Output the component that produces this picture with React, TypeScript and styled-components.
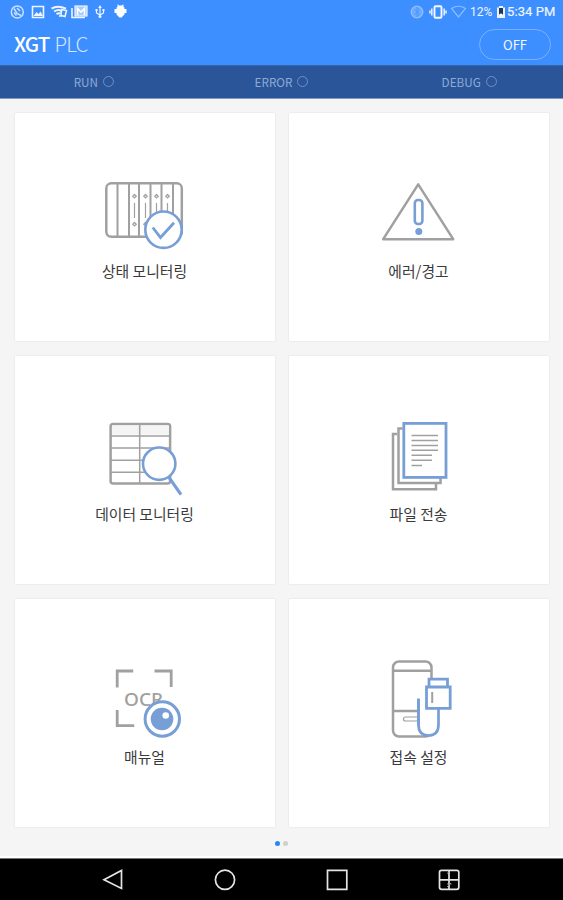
import React from "react";
import styled, { createGlobalStyle } from "styled-components";

const GRAY = "#a0a0a0";
const BLUE = "#779fd6";

const GlobalStyle = createGlobalStyle`
  * { box-sizing: border-box; }
  body { margin: 0; background: #f5f5f5; font-family: "Noto Sans CJK KR", "Noto Sans", sans-serif; }
`;

const Screen = styled.div`
  width: 563px;
  height: 900px;
  display: flex;
  flex-direction: column;
  overflow: hidden;
  background: #f5f5f5;
`;

const StatusBar = styled.div`
  height: 24px;
  flex: none;
  display: flex;
  justify-content: space-between;
  background: #3d8eff;
`;

const StatusRight = styled.div`
  display: flex;
  padding-right: 6px;
  color: #eef5ff;
  font: 400 13px/24px Roboto, sans-serif;
`;

const Battery = styled.span`
  width: 26px;
  font-size: 12px;
  white-space: nowrap;
`;

const Clock = styled.span`
  width: 50px;
  white-space: nowrap;
  letter-spacing: 0.1px;
  -webkit-text-stroke: 0.2px #eef5ff;
`;

const Header = styled.header`
  height: 41px;
  flex: none;
  display: flex;
  align-items: flex-start;
  justify-content: space-between;
  padding: 5px 12px 0 14px;
  background: #3d8eff;
`;

const Title = styled.h1`
  margin: 0;
  color: #fff;
  font-size: 20.5px;
  line-height: 29px;
  font-weight: 500;
  letter-spacing: -0.9px;
`;

const TitleLight = styled.span`
  margin-left: 5px;
  font-weight: 300;
  color: #d6e7ff;
`;

const PowerButton = styled.button`
  width: 72px;
  height: 31px;
  padding: 0;
  border: 1px solid #79b1ff;
  border-radius: 16px;
  background: transparent;
  color: #f4f9ff;
  font: 400 13px/27px "Noto Sans CJK KR", sans-serif;
`;

const Indicators = styled.div`
  height: 34px;
  flex: none;
  display: grid;
  grid-template-columns: repeat(3, 1fr);
  background: #2a5699;
  border-top: 1px solid #3164ac;
  border-bottom: 1px solid #8299c0;
`;

const Indicator = styled.div`
  display: flex;
  align-items: center;
  justify-content: center;
  gap: 5px;
  height: 31px;
  color: #8eaad5;
  font-size: 11.7px;
  line-height: 30px;
`;

const Lamp = styled.i`
  width: 11px;
  height: 11px;
  border: 1px solid #7090c4;
  border-radius: 50%;
`;

const Menu = styled.main`
  flex: none;
  display: grid;
  grid-template-columns: 260px 260px;
  grid-auto-rows: 228px;
  gap: 15px 14px;
  padding: 14px 14.500px 0;
`;

const Card = styled.section`
  display: flex;
  flex-direction: column;
  align-items: center;
  padding-top: 51px;
  background: #fff;
  border-radius: 1px;
  box-shadow: 0 0 2px rgba(0, 0, 0, 0.13);
`;

const CardIcon = styled.svg`
  flex: none;
  width: 120px;
  height: 96px;
  fill: none;
  stroke-width: 2.5;
`;

const CardLabel = styled.span`
  font-size: 14.8px;
  line-height: 21px;
  color: #3a3a3a;
  white-space: nowrap;
`;

const Pager = styled.div`
  flex: 1;
  display: flex;
  justify-content: center;
  gap: 3px;
  padding-top: 14px;
  border-bottom: 2px solid #fff;
`;

const Dot = styled.i<{ $active?: boolean }>`
  width: 5px;
  height: 5px;
  border-radius: 50%;
  background: ${(p) => (p.$active ? "#2b86f5" : "#cfcfcf")};
`;

const NavBar = styled.nav`
  height: 42px;
  flex: none;
  display: grid;
  grid-template-columns: repeat(4, 112px);
  justify-content: center;
  justify-items: center;
  padding-right: 1px;
  background: #000;
  border-top: 1px solid #777;
`;

const NavIcon = styled.svg`
  width: 30px;
  height: 41px;
  fill: none;
  stroke: #e4e4e4;
  stroke-width: 1.7;
`;

const StatusIcons = () => (
  <svg width="135" height="24" fill="none" stroke="#eef5ff" strokeWidth="1.5">
    <circle cx="17.3" cy="12" r="6" stroke="#c9e0ff" />
    <path d="M14 8.5l3 5 4 2M14 12.500l2.500 3M17 8l3 3" stroke="#c9e0ff" />
    <path d="M32.500 6.500h11v11h-11z" strokeWidth="1.600" />
    <path d="M33.500 16l3-4 2 2 2-2.500 2.500 4.500z" fill="#eef5ff" stroke="none" />
    <path d="M51.500 8.700q6-4 14.500 0M54 11.500q5-3 8 0M56.500 14q3-1.500 4 0" strokeWidth="2" />
    <path d="M61.500 9.500l5 1-1.500 6-4-1zM59 16h5" />
    <path d="M72 8v9.500h13" strokeWidth="1.600" />
    <rect x="75" y="6" width="12" height="10" fill="#a9cdff" strokeWidth="1.200" />
    <path d="M77.500 15V8.500l3.500 3.500 3.500-3.500V15" stroke="#fff" strokeWidth="1.600" />
    <path d="M100 7v10M96.500 10v3l3.500 2 3.500-2v-3" strokeWidth="1.200" />
    <path d="M98.200 8l1.800-3 1.800 3zM95.500 9h2v2h-2zM102.500 9h2v2h-2z" fill="#eef5ff" stroke="none" />
    <circle cx="100" cy="16.500" r="1.500" fill="#eef5ff" stroke="none" />
    <path d="M116.500 9q0-2.500 1.500-3l-1-1 1-.5 1.200 1h2.600l1.200-1 1 .5-1 1q1.500.5 1.500 3h2v4h-2v1.500l-3 3h-2l-3-3V13h-2V9z" fill="#fff" stroke="none" />
  </svg>
);

const SignalIcons = () => (
  <svg width="60" height="24" fill="none">
    <circle cx="7" cy="12" r="5.800" fill="#6eabff" stroke="#8fbeff" strokeWidth="1.300" />
    <path d="M4.500 9.500l5 4.500-2.500 2.500v-9l2.500 2.500-5 4.500" stroke="#4b96ff" />
    <rect x="24.500" y="6.200" width="7" height="11.500" rx="1" stroke="#f4f9ff" strokeWidth="1.900" />
    <path d="M21.800 8.500v7M20 10.500v3M34.200 8.500v7M36 10.500v3" stroke="#e0edff" strokeWidth="1.600" />
    <path d="M41.500 8.500q7-4.500 14 0l-7 8.500z" stroke="#8ebeff" strokeWidth="1.200" />
  </svg>
);

const BatteryIcon = () => (
  <svg width="11" height="24">
    <path d="M1 7.500h2V6h4v1.500h2V18H1z" fill="#e9f2ff" />
    <path d="M3 8h4v6l-2 1.500L3 14z" fill="#243852" />
    <circle cx="5" cy="14.800" r="1.200" fill="#fff" />
  </svg>
);

const ICONS: Record<string, React.ReactNode> = {
  status: (
    <CardIcon viewBox="0.5 -6 120 96" stroke={GRAY}>
      <rect x="21.800" y="13.300" width="75.500" height="53.500" rx="5" />
      <path d="M33 13v54M44.500 13v54M54.500 13v54M66 13v54M77 13v54M88.500 13v54" strokeWidth="2" />
      <path d="M50 33v15M61 33v15M72 33v15M83 33v15" strokeWidth="1.200" />
      {[50, 61, 72, 83].map((x) => (
        <path key={x} d={`M${x} 24.500l1.700 1.700-1.700 1.700-1.700-1.700zM${x} 52.500l1.700 1.700-1.700 1.700-1.700-1.700z`} strokeWidth="1.300" />
      ))}
      <circle cx="79" cy="59.700" r="18.200" fill="#fff" stroke={BLUE} strokeWidth="2.600" />
      <path d="M68.300 57.500l7.700 10 13.500-14.800" stroke={BLUE} strokeWidth="2.800" />
    </CardIcon>
  ),
  alert: (
    <CardIcon viewBox="-0.500 -6 120 96" stroke={GRAY}>
      <path d="M58.700 14.300l35 54.900H23.700z" strokeLinejoin="round" />
      <rect x="55.300" y="30" width="7.600" height="24" rx="3.200" stroke={BLUE} strokeWidth="2.600" />
      <circle cx="59.300" cy="61.500" r="3.500" fill={BLUE} stroke="none" />
    </CardIcon>
  ),
  data: (
    <CardIcon viewBox="0.5 -3 120 96" stroke={GRAY}>
      <rect x="26.100" y="14" width="59.500" height="59.500" rx="2.500" />
      <path d="M27.500 15.500h57v9h-57z" fill="#f4f4f4" stroke="none" />
      <path d="M26 26h59M26 38h59M26 50.300h59M26 62.300h59M55.200 14v59" strokeWidth="1.500" />
      <circle cx="74.700" cy="53.700" r="16.200" fill="#fff" stroke={BLUE} strokeWidth="2.600" />
      <path d="M84.300 67.200l12.200 17.500" stroke={BLUE} strokeWidth="3.200" />
    </CardIcon>
  ),
  files: (
    <CardIcon viewBox="-0.500 -3 120 96" stroke={GRAY}>
      <path d="M37.500 24h-4v55.300h43V74" />
      <path d="M43 18.500h-4V73h42v-5" />
      <rect x="44.300" y="13.400" width="42.200" height="54" fill="#fff" stroke={BLUE} strokeWidth="2.800" />
      <path d="M52 25.500h26.500M52 30.500h26.500M52 35.500h26.500M52 40.300h26.500M52 45.200h20.500M52 50.300h20.500M52 55.500h10.500" strokeWidth="1.500" />
    </CardIcon>
  ),
  manual: (
    <CardIcon viewBox="0.5 0 120 96" stroke={GRAY}>
      <path d="M32.700 37.500V21h16M70 21h16.700v16M32.700 60v15.700h17" strokeWidth="2.800" />
      <text x="39.500" y="55.800" fill={GRAY} stroke="none" fontFamily="Noto Sans" fontWeight="500" fontSize="18.500" textLength="39" lengthAdjust="spacingAndGlyphs">OCR</text>
      <circle cx="77.800" cy="69" r="17.200" fill="#fff" stroke={BLUE} strokeWidth="3" />
      <circle cx="77.500" cy="69" r="11.300" fill={BLUE} stroke="none" />
      <circle cx="81.200" cy="65.500" r="3.300" fill="#fff" stroke="none" />
    </CardIcon>
  ),
  connection: (
    <CardIcon viewBox="-0.500 0 120 96" stroke={GRAY}>
      <rect x="33.500" y="11.500" width="38.500" height="75" rx="6" />
      <path d="M33.500 20.800H72M33.500 61H72" />
      <rect x="44" y="67" width="18" height="4" rx="2" strokeWidth="1.200" />
      <path d="M59 49v25.500q0 11 10 11t10-11V59" fill="#fff" stroke={BLUE} strokeWidth="2.700" />
      <path d="M60.500 48h17v10h-17z" fill="#fff" stroke="none" />
      <path d="M59 48.500v26" stroke={BLUE} strokeWidth="2.700" />
      <path d="M69.500 36.500v-7.300H88v7.300M67 37h23.700v21.300H67z" fill="#fff" stroke={BLUE} strokeWidth="2.800" />
      <path d="M72.700 42v11" strokeWidth="2" />
    </CardIcon>
  ),
};

const ITEMS = [
  { icon: "status", label: "상태 모니터링" },
  { icon: "alert", label: "에러/경고" },
  { icon: "data", label: "데이터 모니터링" },
  { icon: "files", label: "파일 전송" },
  { icon: "manual", label: "매뉴얼" },
  { icon: "connection", label: "접속 설정" },
];

export default function App() {
  return (
    <Screen>
      <GlobalStyle />
      <StatusBar>
        <StatusIcons />
        <StatusRight>
          <SignalIcons />
          <Battery>12%</Battery>
          <BatteryIcon />
          <Clock>5:34 PM</Clock>
        </StatusRight>
      </StatusBar>
      <Header>
        <Title>XGT<TitleLight>PLC</TitleLight></Title>
        <PowerButton>OFF</PowerButton>
      </Header>
      <Indicators>
        {["RUN", "ERROR", "DEBUG"].map((name) => (
          <Indicator key={name}>{name}<Lamp /></Indicator>
        ))}
      </Indicators>
      <Menu>
        {ITEMS.map((item) => (
          <Card key={item.icon}>
            {ICONS[item.icon]}
            <CardLabel>{item.label}</CardLabel>
          </Card>
        ))}
      </Menu>
      <Pager><Dot $active /><Dot /></Pager>
      <NavBar>
        <NavIcon viewBox="0 0 30 41"><path d="M23.500 11.500v18L6 20.800z" /></NavIcon>
        <NavIcon viewBox="0 0 30 41"><circle cx="15" cy="20.800" r="9.600" /></NavIcon>
        <NavIcon viewBox="0 0 30 41"><path d="M5.500 11.300h19.300v19H5.500z" /></NavIcon>
        <NavIcon viewBox="0 0 30 41">
          <rect x="5.500" y="11.300" width="19.300" height="19" rx="2" />
          <path d="M5.500 20.800h19.300M15 12v18" />
          <path d="M13 14.500l2-1.500M13 25h4.500M13 28l4-4" strokeWidth="1" stroke="#999" />
        </NavIcon>
      </NavBar>
    </Screen>
  );
}
